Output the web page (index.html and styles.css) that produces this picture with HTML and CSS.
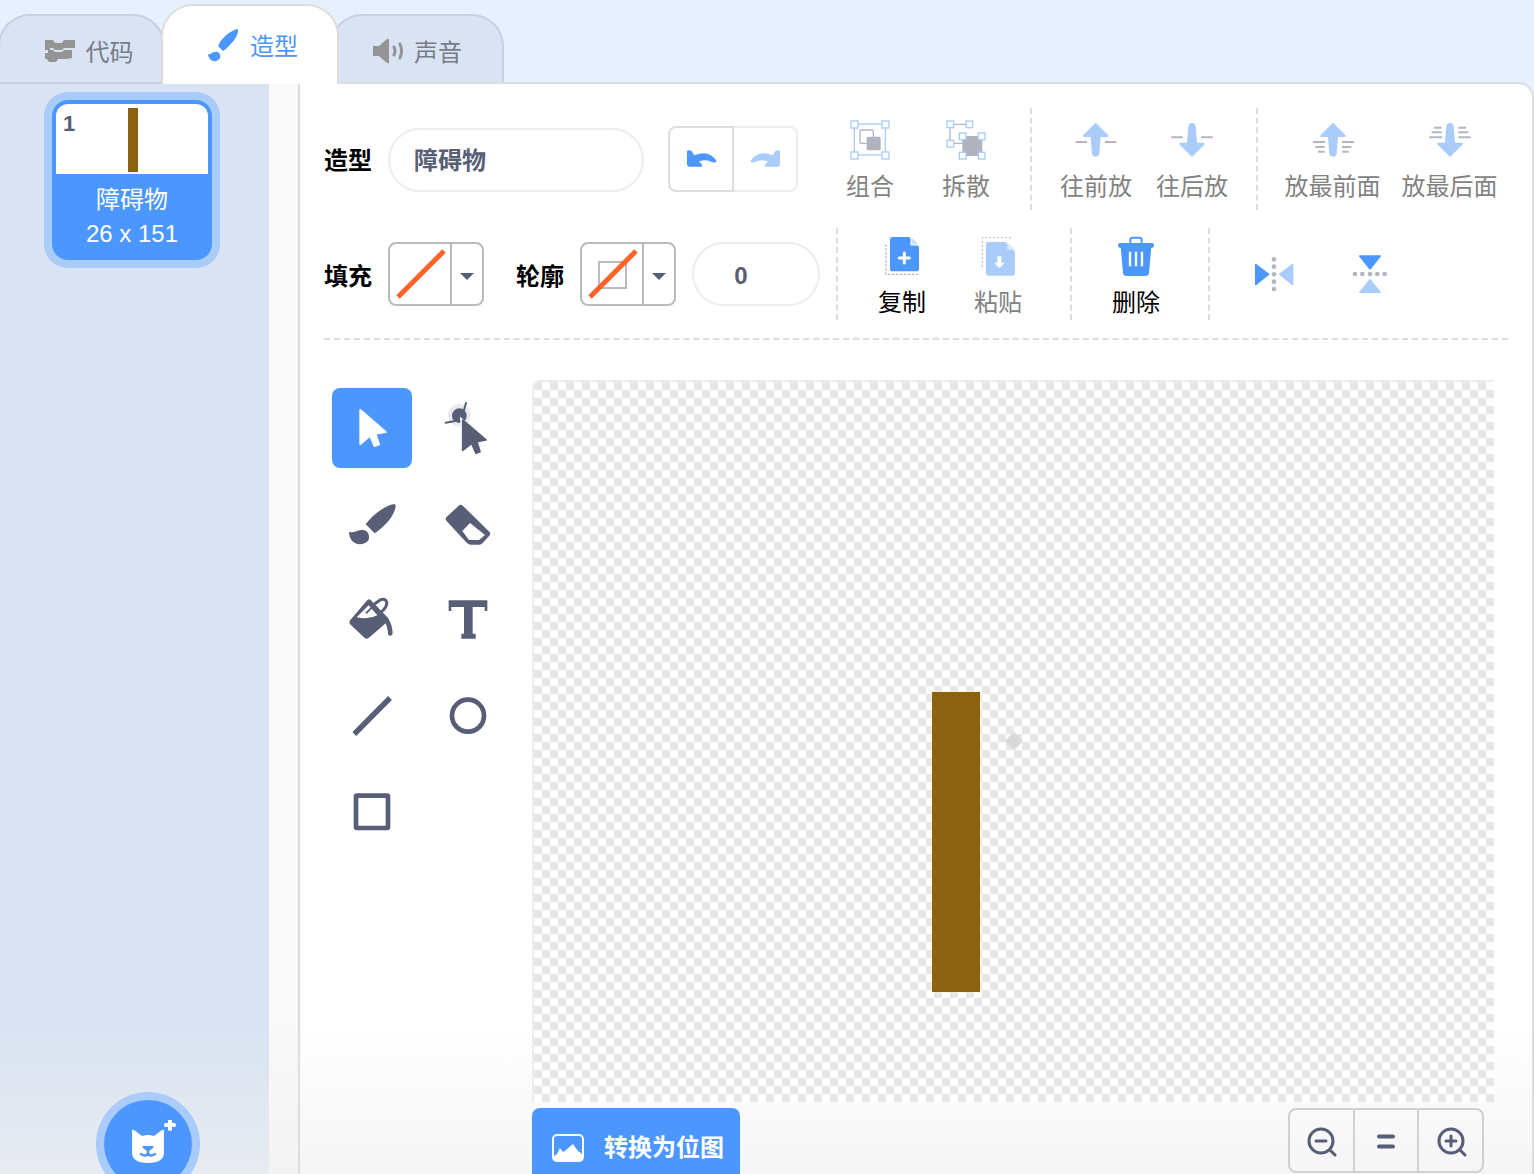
FILE: index.html
```html
<!DOCTYPE html>
<html lang="zh-CN">
  <head>
    <meta charset="utf-8" />
    <meta name="viewport" content="width=device-width, initial-scale=1.0" />
    <title>造型</title>
    <link rel="stylesheet" href="styles.css">
  </head>

  <body>
    <nav class="tabs">
      <div class="tab tabCode">
        <svg class="tabIcon" width="32" height="24" viewBox="0 0 32 24"><path fill="#949494" d="M1 1h8l2 3h7l2-3h11v8H20l-2 2h-7L9 9H6v2h3l2 2h7l2-2h8v8l-5 1H14l-2 3H5l-2-3H1v-6h3v-3H1z"/></svg>
        <span>代码</span>
      </div>
      <div class="tab tabActive">
        <svg class="tabIcon" width="34" height="34" viewBox="0 0 34 34"><path fill="#4c97ff" d="M32 1C26 2 19 7 14 14l-2 4 5 5 3-2C26 15 33 8 32 1zM2 26c3 1 4-2 7-2 4-1 6 3 5 6-2 4-8 4-10 1-1-1-2-3-2-5z"/></svg>
        <span>造型</span>
      </div>
      <div class="tab tabSound">
        <svg class="tabIcon" width="32" height="26" viewBox="0 0 32 26"><path fill="#949494" d="M1 8h6l8-7q2-1 2 1v22q0 2-2 1l-8-7H1z"/><path fill="none" stroke="#949494" stroke-width="3" stroke-linecap="round" d="M22 9q2 4 0 8M28 6q3 7 0 14"/></svg>
        <span>声音</span>
      </div>
    </nav>

    <div class="workspace">
      <aside class="sidebar">
        <div class="costumeCard">
          <div class="costumeThumb">
            <span class="costumeIndex">1</span>
            <div class="costumeBar"></div>
          </div>
          <div class="costumeName">障碍物</div>
          <div class="costumeSize">26 x 151</div>
        </div>
        <div class="addButton">
          <svg class="catIcon" width="56" height="48" viewBox="0 0 56 48">
            <path fill="#fff" d="M8 11q0-2 2-1l8 6q6-2 12 0l8-6q2-1 2 1v21q0 11-16 11T8 32z"/>
            <path fill="#4c97ff" d="M19 26h10q1 1 0 2l-4 3h-2l-4-3q-1-1 0-2z"/>
            <path fill="none" stroke="#4c97ff" stroke-width="2.5" stroke-linecap="round" d="M17 34q4 3 7 0q3 3 7 0M24 30v4"/>
            <path fill="#fff" d="M44 0h4v3h3q2 2 0 4h-3v3q-2 2-4 0V7h-3q-2-2 0-4h3z"/>
          </svg>
        </div>
      </aside>

      <div class="scrollStrip"></div>

      <main class="editor">
        <section class="toolbarRow rowName">
          <span class="fieldLabel">造型</span>
          <div class="pillInput nameInput">障碍物</div>
          <div class="undoGroup">
            <div class="undoButton">
              <svg width="32" height="20" viewBox="500 183 96 60"><path fill="#4c97ff" d="M503 190v38q0 8 8 8h37q2-9-10-15 22-9 40 1 8 4 14-2-22-36-67-18l-9-14q-11-4-13 2z"/></svg>
            </div>
            <div class="undoButton">
              <svg width="32" height="20" viewBox="500 183 96 60"><path fill="#a9ccfb" transform="matrix(-1 0 0 1 1096 0)" d="M503 190v38q0 8 8 8h37q2-9-10-15 22-9 40 1 8 4 14-2-22-36-67-18l-9-14q-11-4-13 2z"/></svg>
            </div>
          </div>
          <div class="toolGroup firstGroup">
            <div class="toolButton">
              <svg width="48" height="48" viewBox="978 78 144 144">
                <rect x="1003" y="102" width="93" height="93" fill="none" stroke="#a9ccfb" stroke-width="4"/>
                <rect x="1020" y="120" width="40" height="40" rx="4" fill="#fff" stroke="#b3b6c2" stroke-width="4"/>
                <rect x="1040" y="140" width="42" height="41" rx="5" fill="#b0b3be"/>
                <g fill="#fff" stroke="#a9ccfb" stroke-width="4">
                  <rect x="993" y="93" width="21" height="21"/><rect x="1086" y="93" width="21" height="21"/>
                  <rect x="993" y="186" width="21" height="21"/><rect x="1086" y="186" width="21" height="21"/>
                </g>
              </svg>
              <span>组合</span>
            </div>
            <div class="toolButton">
              <svg width="48" height="48" viewBox="1266 78 144 144">
                <path fill="none" stroke="#b3b6c2" stroke-width="4" d="M1290 103h58M1290 103v57h38"/>
                <rect x="1327" y="138" width="60" height="60" fill="#b0b3be"/>
                <g fill="#fff" stroke="#a9ccfb" stroke-width="4">
                  <rect x="1281" y="93" width="20" height="20"/><rect x="1338" y="93" width="20" height="20"/>
                  <rect x="1281" y="151" width="20" height="20"/><rect x="1318" y="129" width="20" height="20"/>
                  <rect x="1375" y="129" width="20" height="20"/><rect x="1318" y="187" width="20" height="20"/>
                  <rect x="1375" y="187" width="20" height="20"/>
                </g>
              </svg>
              <span>拆散</span>
            </div>
          </div>
          <div class="toolGroup">
            <div class="toolButton">
              <svg width="48" height="48" viewBox="126 78 144 144">
                <path fill="none" stroke="#b3b6c2" stroke-width="6" d="M137 156h34M225 156h34"/>
                <path fill="#a9ccfb" d="M197 98l37 37q4 5-3 6h-19l-4 50q-2 9-11 9t-11-9l-4-50h-19q-7-1-3-6z"/>
              </svg>
              <span>往前放</span>
            </div>
            <div class="toolButton">
              <svg width="48" height="48" viewBox="414 78 144 144">
                <path fill="none" stroke="#b3b6c2" stroke-width="6" d="M424 142h34M513 142h35"/>
                <path fill="#a9ccfb" d="M486 201l-37-37q-4-5 3-6h19l4-50q2-9 11-9t11 9l4 50h19q7 1 3 6z"/>
              </svg>
              <span>往后放</span>
            </div>
          </div>
          <div class="toolGroup lastGroup">
            <div class="toolButton wideButton">
              <svg width="48" height="48" viewBox="833 78 144 144">
                <path fill="none" stroke="#b3b6c2" stroke-width="6" d="M845 156h36M932 156h36M852 171h28M932 171h28M860 185h20M932 185h20"/>
                <path fill="#a9ccfb" d="M905 98l37 37q4 5-3 6h-19l-4 50q-2 9-11 9t-11-9l-4-50h-19q-7-1-3-6z"/>
              </svg>
              <span>放最前面</span>
            </div>
            <div class="toolButton wideButton">
              <svg width="48" height="48" viewBox="1188 78 144 144">
                <path fill="none" stroke="#b3b6c2" stroke-width="6" d="M1198 142h38M1285 142h37M1205 127h30M1285 127h30M1212 113h23M1285 113h23"/>
                <path fill="#a9ccfb" d="M1260 201l-37-37q-4-5 3-6h19l4-50q2-9 11-9t11 9l4 50h19q7 1 3 6z"/>
              </svg>
              <span>放最后面</span>
            </div>
          </div>
        </section>

        <section class="toolbarRow rowStyle">
          <span class="fieldLabel">填充</span>
          <div class="colorPicker">
            <div class="swatch">
              <svg width="60" height="60" viewBox="0 0 60 60"><path stroke="#ff6329" stroke-width="5" d="M8 53L54 7"/></svg>
            </div>
            <div class="caretBox"><span class="caret"></span></div>
          </div>
          <span class="fieldLabel outlineLabel">轮廓</span>
          <div class="colorPicker">
            <div class="swatch">
              <svg width="60" height="60" viewBox="0 0 60 60"><rect x="17" y="18" width="27" height="26" fill="none" stroke="#bbb" stroke-width="2"/><path stroke="#ff6329" stroke-width="5" d="M8 53L54 7"/></svg>
            </div>
            <div class="caretBox"><span class="caret"></span></div>
          </div>
          <div class="pillInput widthInput">0</div>

          <div class="toolGroup clipGroup">
            <div class="toolButton activeButton">
              <svg width="48" height="48" viewBox="1074 425 144 144">
                <path fill="none" stroke="#b3b6c2" stroke-width="4" stroke-dasharray="7 5" d="M1098 462v90h96"/>
                <path fill="#4c97ff" d="M1117 440h51l29 29v66q0 8-8 8h-72q-7 0-7-8v-88q0-7 7-7z"/>
                <path fill="#fff" d="M1172 440l25 25h-25z" stroke="#fff"/>
                <path fill="#c9dfff" d="M1175 442l20 20h-20z"/>
                <path stroke="#fff" stroke-width="9" stroke-linecap="round" d="M1153 488v30M1138 503h30"/>
              </svg>
              <span>复制</span>
            </div>
            <div class="toolButton">
              <svg width="48" height="48" viewBox="1362 425 144 144">
                <path fill="none" stroke="#c8cad2" stroke-width="4" stroke-dasharray="7 5" d="M1387 530v-88h92"/>
                <path fill="#a9ccfb" d="M1405 455h51l29 29v64q0 8-8 8h-72q-7 0-7-8v-86q0-7 7-7z"/>
                <path fill="#dbe9ff" d="M1462 455l23 23h-23z"/>
                <path fill="#fff" d="M1432 498h12v19h10l-16 17-16-17h10z"/>
              </svg>
              <span>粘贴</span>
            </div>
          </div>
          <div class="toolGroup clipGroup">
            <div class="toolButton activeButton">
              <svg width="48" height="48" viewBox="246 425 144 144">
                <path fill="none" stroke="#4c97ff" stroke-width="6" d="M301 460v-12q0-6 6-6h22q6 0 6 6v12"/>
                <rect x="264" y="458" width="108" height="14" rx="6" fill="#4c97ff"/>
                <path fill="#4c97ff" d="M272 468h92l-7 80q-1 9-10 9h-58q-9 0-10-9z"/>
                <path stroke="#fff" stroke-width="7" d="M300 484v44M318 484v44M336 484v44"/>
              </svg>
              <span>删除</span>
            </div>
          </div>
          <div class="toolGroup flipGroup">
            <div class="toolButton">
              <svg width="48" height="48" viewBox="660 479 144 144">
                <path fill="#4c97ff" stroke="#4c97ff" stroke-width="4" stroke-linejoin="round" d="M677 522l39 30-39 31z"/>
                <path fill="#a9ccfb" stroke="#a9ccfb" stroke-width="4" stroke-linejoin="round" d="M788 522l-39 30 39 31z"/>
                <g fill="#b3b6c2"><circle cx="732" cy="507" r="7"/><circle cx="732" cy="529" r="7"/><circle cx="732" cy="552" r="7"/><circle cx="732" cy="574" r="7"/><circle cx="732" cy="596" r="7"/></g>
              </svg>
            </div>
            <div class="toolButton">
              <svg width="48" height="48" viewBox="948 479 144 144">
                <path fill="#4c97ff" stroke="#4c97ff" stroke-width="4" stroke-linejoin="round" d="M989 497h62l-31 39z"/>
                <path fill="#a9ccfb" stroke="#a9ccfb" stroke-width="4" stroke-linejoin="round" d="M989 606h62l-31-38z"/>
                <g fill="#b3b6c2"><circle cx="975" cy="551" r="7"/><circle cx="997" cy="551" r="7"/><circle cx="1020" cy="551" r="7"/><circle cx="1042" cy="551" r="7"/><circle cx="1064" cy="551" r="7"/></g>
              </svg>
            </div>
          </div>
        </section>

        <section class="drawArea">
          <div class="modeTools">
            <div class="modeTool modeActive">
              <svg width="80" height="80" viewBox="36 54 240 240"><path fill="#fff" stroke="#fff" stroke-width="6" stroke-linejoin="round" d="M121 120l76 66-31 5 11 32-13 5-14-31-29 25z"/></svg>
            </div>
            <div class="modeTool">
              <svg width="80" height="80" viewBox="324 54 240 240">
                <circle cx="418" cy="136" r="34" fill="#e9eaee"/>
                <path stroke="#575e75" stroke-width="6" stroke-linecap="round" d="M438 99l-8 28M377 158l28-5"/>
                <circle cx="418" cy="137" r="22" fill="#575e75"/>
                <path fill="#fff" d="M420 140l90 70-30 8 10 30-22 8-14-30-28 22z"/>
                <path fill="#575e75" stroke="#575e75" stroke-width="5" stroke-linejoin="round" d="M428 150l70 60-27 5 9 30-12 5-13-30-27 21z"/>
              </svg>
            </div>
            <div class="modeTool">
              <svg width="80" height="80" viewBox="36 342 240 240">
                <path fill="#575e75" d="M225 403c-6-2-22 4-38 14-22 13-38 29-50 46l27 27c24-17 44-37 54-56 8-14 11-27 7-31zM87 485c12 7 26-7 42-5 15 2 21 15 17 29-8 14-32 18-45 8-10-8-14-21-14-32z"/>
              </svg>
            </div>
            <div class="modeTool">
              <svg width="80" height="80" viewBox="324 342 240 240">
                <path fill="#575e75" d="M416 407q6-5 12 0l80 78q5 6 0 12l-20 22q-4 5-10 5h-24q-8 0-14-6l-61-66q-4-6 0-10z"/>
                <path fill="#fff" d="M427 483l23-24 45 36-18 15h-30z"/>
              </svg>
            </div>
            <div class="modeTool">
              <svg width="80" height="80" viewBox="36 630 240 240">
                <path fill="none" stroke="#575e75" stroke-width="9" d="M150 712l30-22q16-6 20 6 2 10-8 22l-20 20"/>
                <path fill="#575e75" d="M142 690q5-4 10 0l52 54q4 5 0 10l-58 50q-6 4-12 0l-42-40q-7-7-1-14z"/>
                <path fill="#fff" d="M146 706l-36 36q36 8 62-6z"/>
                <path stroke="#575e75" stroke-width="6" d="M138 730l26-26M155 702l40 38"/>
                <path fill="none" stroke="#575e75" stroke-width="14" stroke-linecap="round" d="M198 748q12 18 13 42"/>
              </svg>
            </div>
            <div class="modeTool">
              <svg width="80" height="80" viewBox="324 630 240 240">
                <path fill="#575e75" d="M386 691h116v32h-8v-12h-36v80h9v15h-43v-15h8v-80h-38v12h-8z"/>
              </svg>
            </div>
            <div class="modeTool">
              <svg width="80" height="80" viewBox="36 18 240 240"><path stroke="#575e75" stroke-width="16" d="M103 192L210 84"/></svg>
            </div>
            <div class="modeTool">
              <svg width="80" height="80" viewBox="324 18 240 240"><circle cx="444" cy="137" r="48" fill="none" stroke="#575e75" stroke-width="14"/></svg>
            </div>
            <div class="modeTool">
              <svg width="80" height="80" viewBox="36 306 240 240"><rect x="108" y="377" width="96" height="97" rx="3" fill="none" stroke="#575e75" stroke-width="14"/></svg>
            </div>
          </div>

          <div class="canvasColumn">
            <div class="paintCanvas">
              <div class="paintRect"></div>
              <div class="centerMark"></div>
            </div>
            <div class="canvasFooter">
              <div class="bitmapButton">
                <svg width="34" height="30" viewBox="0 0 34 30">
                  <rect x="2" y="2" width="30" height="26" rx="4" fill="none" stroke="#fff" stroke-width="2"/>
                  <path fill="#fff" d="M2 24l4-3 3-6 3 4 3-2 7-6 5 7 3 2 2 4v2q0 2-2 2H4q-2 0-2-2z"/>
                </svg>
                <span>转换为位图</span>
              </div>
              <div class="zoomGroup">
                <div class="zoomButton">
                  <svg width="32" height="32" viewBox="0 0 32 32" class="zoomIcon"><circle cx="16" cy="16" r="12"/><path d="M25 25l5 5M11 16h10"/></svg>
                </div>
                <div class="zoomButton">
                  <svg width="32" height="32" viewBox="0 0 32 32" class="zoomIcon zoomEqual"><path d="M9 11.5h14M9 21.5h14"/></svg>
                </div>
                <div class="zoomButton">
                  <svg width="32" height="32" viewBox="0 0 32 32" class="zoomIcon"><circle cx="16" cy="16" r="12"/><path d="M25 25l5 5M11 16h10M16 11v10"/></svg>
                </div>
              </div>
            </div>
          </div>
        </section>
      </main>
    </div>
  </body>
</html>
```

FILE: styles.css
```css
html,
body {
  height: 100%;
  margin: 0;
}

body {
  overflow: hidden;
  background: #e6f0ff;
  font-family: 'Liberation Sans', 'Noto Sans CJK SC', sans-serif;
  font-size: 24px;
  color: #575e75;
}

svg {
  display: block;
  flex-shrink: 0;
}

/* tabs */
.tabs {
  display: flex;
  align-items: flex-end;
  height: 82px;
}

.tab {
  display: flex;
  align-items: center;
  justify-content: center;
  gap: 10px;
  box-sizing: border-box;
  height: 68px;
  padding-top: 3px;
  background: #d9e3f2;
  border: 2px solid #c6d0df;
  border-bottom: none;
  border-radius: 32px 32px 0 0;
  color: #767b8a;
}

.tabCode {
  width: 167px;
  margin-left: -2px;
  padding-left: 14px;
}

.tabActive {
  position: relative;
  z-index: 2;
  width: 178px;
  height: 80px;
  margin-left: -4px;
  margin-bottom: -2px;
  padding-top: 0;
  padding-bottom: 1px;
  padding-left: 4px;
  background: #fff;
  border-color: #ddd;
  color: #4c97ff;
}

.tabSound {
  width: 174px;
  margin-left: -9px;
  padding-left: 0;
}

/* layout */
.workspace {
  display: flex;
  height: 1092px;
}

/* backgrounds fade to grey near the bottom edge of the shot */
.sidebar,
.scrollStrip,
.editor {
  background-image: linear-gradient(rgba(240, 240, 240, 0) calc(100% - 150px), rgba(240, 240, 240, 0.65));
}

.sidebar {
  display: flex;
  flex-direction: column;
  align-items: center;
  justify-content: space-between;
  box-sizing: border-box;
  width: 269px;
  padding: 16px 5px 0 0;
  background-color: #d9e3f2;
  border-top: 2px solid #c6d0df;
}

.scrollStrip {
  box-sizing: border-box;
  width: 29px;
  background-color: #f9f9f9;
  border-top: 2px solid #ddd;
}

.editor {
  flex: 1;
  box-sizing: border-box;
  padding: 24px 24px 0;
  background-color: #fff;
  border: 2px solid #ddd;
  border-bottom: none;
  border-top-right-radius: 16px;
}

/* costume list */
.costumeCard {
  box-sizing: border-box;
  width: 160px;
  height: 160px;
  padding: 4px;
  background: #4c97ff;
  border-radius: 16px;
  box-shadow: 0 0 0 8px #a9ccfb;
  color: #fff;
  text-align: center;
}

.costumeThumb {
  position: relative;
  display: flex;
  justify-content: center;
  height: 70px;
  background: #fff;
  border-radius: 12px 12px 0 0;
}

.costumeIndex {
  position: absolute;
  top: 8px;
  left: 7px;
  font-size: 22px;
  font-weight: 700;
  line-height: 24px;
  color: #575e75;
}

.costumeBar {
  width: 10px;
  height: 64px;
  margin: 4px 0 0 2px;
  background: #8a6212;
}

.costumeName {
  margin-top: 8px;
  line-height: 36px;
}

.costumeSize {
  line-height: 32px;
}

.addButton {
  display: flex;
  align-items: center;
  justify-content: center;
  box-sizing: border-box;
  width: 88px;
  height: 88px;
  margin: 0 0 -14px 32px;
  background: #4c97ff;
  border-radius: 50%;
  box-shadow: 0 0 0 8px #a9ccfb;
}

.catIcon {
  margin-left: 8px;
}

/* toolbar */
.toolbarRow {
  display: flex;
  align-items: center;
}

.rowName {
  height: 102px;
  margin-bottom: 18px;
}

.rowStyle {
  height: 92px;
  padding-bottom: 18px;
  border-bottom: 2px dashed #ddd;
}

.fieldLabel {
  width: 48px;
  margin-right: 16px;
  font-weight: 700;
  color: #000;
  white-space: nowrap;
}

.rowName .fieldLabel {
  margin-top: -2px;
}

.outlineLabel {
  margin-left: 32px;
}

.pillInput {
  display: flex;
  align-items: center;
  box-sizing: border-box;
  height: 64px;
  border: 2px solid #e9eef2;
  border-radius: 32px;
  font-weight: 700;
}

.nameInput {
  width: 256px;
  margin-top: 2px;
  padding: 0 0 4px 24px;
}

.widthInput {
  justify-content: center;
  width: 128px;
  margin-left: 16px;
  padding: 3px 30px 0 0;
}

.undoGroup {
  display: flex;
  box-sizing: border-box;
  width: 130px;
  height: 66px;
  margin-left: 24px;
  border: 2px solid #e9eef2;
  border-radius: 8px;
}

.undoButton {
  display: flex;
  flex: 1;
  align-items: center;
  justify-content: center;
}

.undoButton:first-child {
  margin: -2px 0 -2px -2px;
  border: 2px solid #ddd;
  border-radius: 8px 0 0 8px;
}

.undoButton:first-child svg {
  margin-left: 2px;
}

.toolGroup {
  display: flex;
  align-items: center;
  height: 100%;
  padding: 0 16px;
  border-left: 2px dashed #ddd;
}

.firstGroup {
  margin-left: 8px;
  border-left: none;
}

.lastGroup,
.flipGroup {
  padding-right: 0;
}

.clipGroup {
  padding-right: 24px;
}

.widthInput + .clipGroup {
  margin-left: 16px;
}

.toolButton {
  display: flex;
  flex-direction: column;
  align-items: center;
  gap: 7px;
  width: 96px;
  color: #828282;
}

.toolButton span {
  line-height: 32px;
  white-space: nowrap;
}

.rowStyle .toolButton span {
  margin-bottom: -2px;
}

.wideButton {
  width: 117px;
}

.activeButton {
  color: #000;
}

.colorPicker {
  display: flex;
  box-sizing: border-box;
  width: 96px;
  height: 64px;
  border: 2px solid #bbb;
  border-radius: 8px;
}

.swatch {
  box-sizing: border-box;
  width: 62px;
  border-right: 2px solid #bbb;
}

.caretBox {
  display: flex;
  flex: 1;
  align-items: center;
  justify-content: center;
}

.caret {
  width: 0;
  height: 0;
  margin-top: 4px;
  border-top: 7px solid #575e75;
  border-left: 7px solid transparent;
  border-right: 7px solid transparent;
}

/* draw area */
.drawArea {
  display: flex;
  padding-top: 40px;
}

.modeTools {
  display: grid;
  grid-template-columns: 80px 80px;
  grid-auto-rows: 80px;
  gap: 16px;
  align-content: start;
  width: 176px;
  margin: 8px 24px 0 8px;
}

.modeActive {
  background: #4c97ff;
  border-radius: 8px;
}

.canvasColumn {
  width: 962px;
}

.paintCanvas {
  position: relative;
  box-sizing: border-box;
  height: 722px;
  background: repeating-conic-gradient(#fff 0 25%, #e6e6e6 0 50%) 0 0 / 16px 16px;
  background-origin: padding-box;
  border-top: 2px solid #eaeef3;
  border-left: 2px solid #eaeef3;
  border-radius: 8px 0 0 0;
}

.paintRect {
  position: absolute;
  left: 398px;
  top: 310px;
  width: 48px;
  height: 300px;
  background: #8a6212;
  box-shadow: 0 0 0 1px rgba(255, 240, 200, 0.6);
}

.centerMark {
  position: absolute;
  left: 473px;
  top: 352px;
  width: 12px;
  height: 12px;
  background: #d8d8d8;
  border: 1px solid #e4e4e4;
  border-radius: 3px;
  transform: rotate(45deg);
}

.canvasFooter {
  display: flex;
  justify-content: space-between;
  margin: 6px 10px 0 0;
}

.bitmapButton {
  display: flex;
  align-items: center;
  gap: 19px;
  box-sizing: border-box;
  width: 208px;
  height: 80px;
  padding-left: 19px;
  background: #4c97ff;
  border-radius: 8px 8px 0 0;
  color: #fff;
  font-weight: 700;
  line-height: 80px;
}

.zoomGroup {
  display: flex;
  box-sizing: border-box;
  width: 196px;
  height: 65px;
  border: 2px solid #d0d0d0;
  border-radius: 8px;
}

.zoomButton {
  display: flex;
  flex: 1;
  align-items: center;
  justify-content: center;
}

.zoomButton + .zoomButton {
  border-left: 2px solid #d0d0d0;
}

.zoomIcon {
  fill: none;
  stroke: #575e75;
  stroke-width: 3;
  stroke-linecap: round;
}

.zoomEqual {
  stroke-width: 4;
}
```
